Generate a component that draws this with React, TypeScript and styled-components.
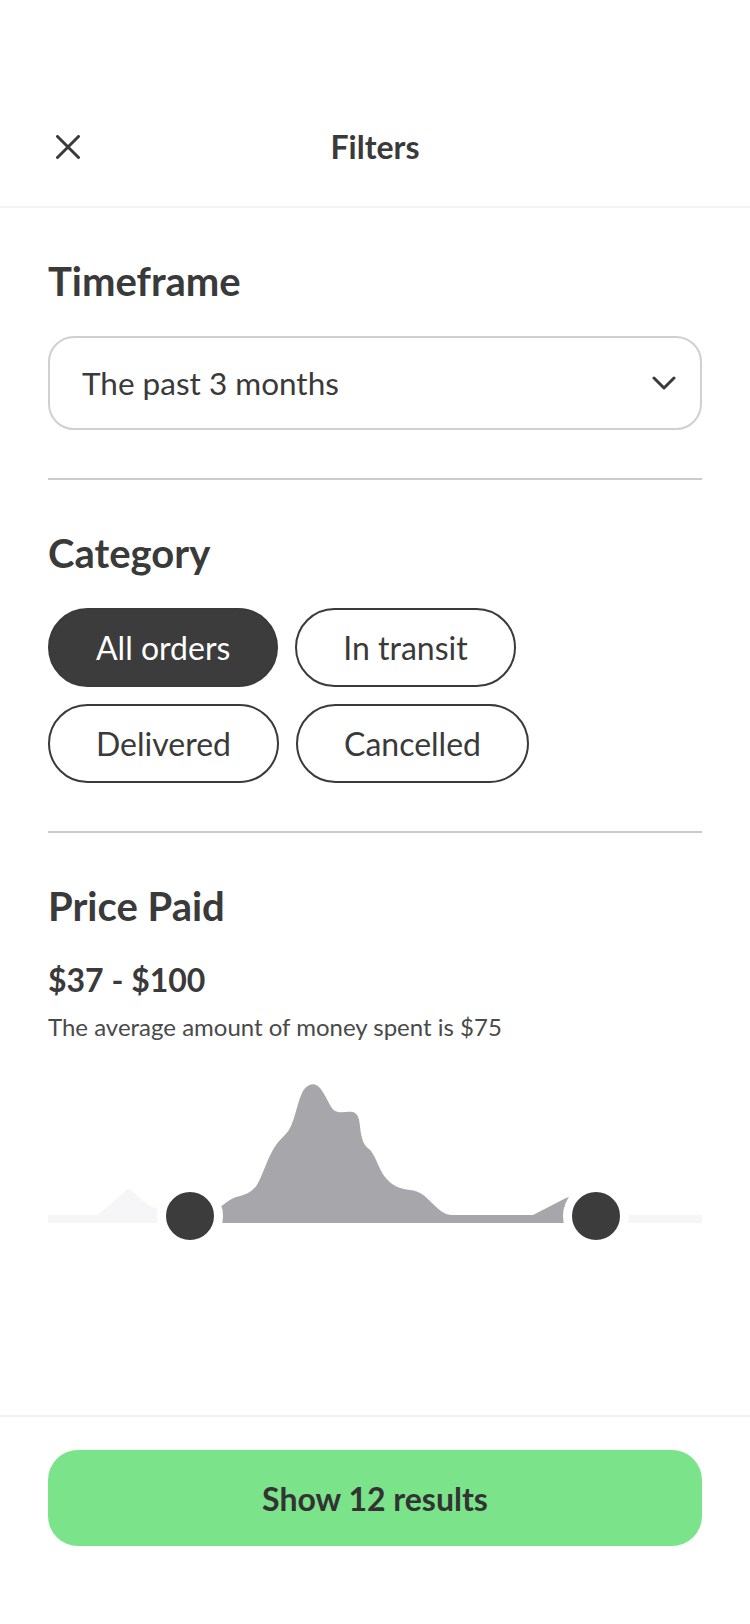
import React from "react";
import styled, { createGlobalStyle } from "styled-components";

const GlobalStyle = createGlobalStyle`
  * { box-sizing: border-box; }
  html, body { margin: 0; padding: 0; background: #ffffff; }
  body { font-family: Lato, "Open Sans", sans-serif; color: #3a3a3a; }
`;

const Page = styled.div`
  width: 750px;
  min-height: 1624px;
  display: flex;
  flex-direction: column;
  background: #fff;
`;

const Header = styled.header`
  display: grid;
  grid-template-columns: 1fr auto 1fr;
  align-items: center;
  height: 208px;
  padding-top: 88px;
  border-bottom: 2px solid #f3f3f5;
`;

const CloseButton = styled.button`
  justify-self: start;
  margin-left: 56px;
  width: 24px;
  height: 24px;
  padding: 0;
  border: none;
  background: none;
  display: flex;
  align-items: center;
  justify-content: center;
  color: #3a3a3a;
`;

const Title = styled.h1`
  margin: 0;
  font-family: Lato, sans-serif;
  font-weight: 700;
  font-size: 32px;
  line-height: 38px;
  color: #3a3a3a;
`;

const Content = styled.main`
  flex: 1;
  padding: 0 48px;
`;

const Section = styled.section<{ $last?: boolean }>`
  padding: 51px 0 ${(p) => (p.$last ? "0" : "48px")};
  border-bottom: ${(p) => (p.$last ? "none" : "2px solid #cbcbd4")};
`;

const SectionTitle = styled.h2<{ $gap?: number }>`
  margin: 0 0 ${(p) => p.$gap ?? 33}px;
  font-weight: 700;
  font-size: 40px;
  line-height: 44px;
  color: #3a3a3a;
`;

const Select = styled.div`
  height: 94px;
  border: 2px solid #cfcfd6;
  border-radius: 26px;
  display: flex;
  align-items: center;
  justify-content: space-between;
  padding: 0 24px 0 32px;
  font-size: 31.5px;
  color: #3a3a3a;
`;

const Chips = styled.div`
  display: flex;
  flex-wrap: wrap;
  gap: 17px;
`;

const Chip = styled.button<{ $active?: boolean }>`
  height: 79px;
  padding: 0 46px;
  border-radius: 40px;
  border: 2px solid #3a3a3a;
  background: ${(p) => (p.$active ? "#3c3c3c" : "#fff")};
  color: ${(p) => (p.$active ? "#fff" : "#3a3a3a")};
  font-family: Lato, sans-serif;
  font-size: 32px;
  display: flex;
  align-items: center;
  justify-content: center;
`;

const Range = styled.div`
  margin: 0 0 15px;
  font-weight: 700;
  font-size: 32px;
  line-height: 36px;
  color: #3a3a3a;
`;

const Caption = styled.p`
  margin: 0 0 42px;
  font-size: 24px;
  line-height: 28px;
  color: #4a4a4a;
`;

const Chart = styled.div`
  position: relative;
  width: 654px;
  height: 140px;
`;

const Knob = styled.div`
  position: absolute;
  top: 100px;
  width: 66px;
  height: 66px;
  border-radius: 50%;
  background: #3c3c3c;
  border: 9px solid #fff;
`;

const Footer = styled.footer`
  border-top: 2px solid #f3f3f5;
  padding: 33px 48px 78px;
`;

const ShowButton = styled.button`
  width: 100%;
  height: 96px;
  border: none;
  border-radius: 30px;
  background: #7be48a;
  color: #333;
  font-family: Lato, sans-serif;
  font-weight: 700;
  font-size: 32px;
`;

const histogram =
  "M48,1223 L48,1215 L98,1215 L129,1188 L148,1205 L165,1212 L205,1212 L218,1208 L223,1205 " +
  "C228,1201 231,1199 236,1197 C246,1195 252,1192 257,1185 C263,1175 268,1156 276,1145 " +
  "C281,1138 287,1134 290,1128 C295,1119 298,1100 303,1091 C308,1083 315,1082 320,1088 " +
  "C326,1095 330,1108 335,1111 C341,1114 350,1110 355,1113 C361,1117 359,1128 362,1138 " +
  "C364,1146 367,1147 371,1151 C377,1159 379,1170 385,1177 C392,1186 400,1189 410,1190 " +
  "C420,1191 425,1196 432,1203 C440,1211 445,1215 452,1215 L533,1215 L566,1198 " +
  "L585,1192 L605,1205 L620,1215 L702,1215 L702,1223 Z";

function PriceChart() {
  return (
    <Chart>
      <svg width="654" height="140" viewBox="48 1083 654 140" style={{ display: "block" }}>
        <defs>
          <clipPath id="sel">
            <rect x="190" y="1000" width="406" height="300" />
          </clipPath>
        </defs>
        <path d={histogram} fill="#f6f6f8" />
        <path d={histogram} fill="#a7a7ab" clipPath="url(#sel)" />
      </svg>
      <Knob style={{ left: 142 - 33 }} />
      <Knob style={{ left: 548 - 33 }} />
    </Chart>
  );
}

export default function App() {
  return (
    <Page>
      <GlobalStyle />
      <Header>
        <CloseButton aria-label="Close">
          <svg width="24" height="24" viewBox="0 0 24 24">
            <path d="M1.5 1.5 L22.5 22.5 M22.5 1.5 L1.5 22.5" stroke="#3a3a3a" strokeWidth="3" strokeLinecap="round" />
          </svg>
        </CloseButton>
        <Title>Filters</Title>
        <div />
      </Header>
      <Content>
        <Section>
          <SectionTitle>Timeframe</SectionTitle>
          <Select>
            <span>The past 3 months</span>
            <svg width="24" height="16" viewBox="0 0 24 16">
              <path d="M2 3 L12 13 L22 3" fill="none" stroke="#3a3a3a" strokeWidth="3" strokeLinecap="round" strokeLinejoin="round" />
            </svg>
          </Select>
        </Section>
        <Section>
          <SectionTitle>Category</SectionTitle>
          <Chips>
            <Chip $active>All orders</Chip>
            <Chip>In transit</Chip>
            <Chip>Delivered</Chip>
            <Chip>Cancelled</Chip>
          </Chips>
        </Section>
        <Section $last>
          <SectionTitle $gap={34}>Price Paid</SectionTitle>
          <Range>$37 - $100</Range>
          <Caption>The average amount of money spent is $75</Caption>
          <PriceChart />
        </Section>
      </Content>
      <Footer>
        <ShowButton>Show 12 results</ShowButton>
      </Footer>
    </Page>
  );
}
